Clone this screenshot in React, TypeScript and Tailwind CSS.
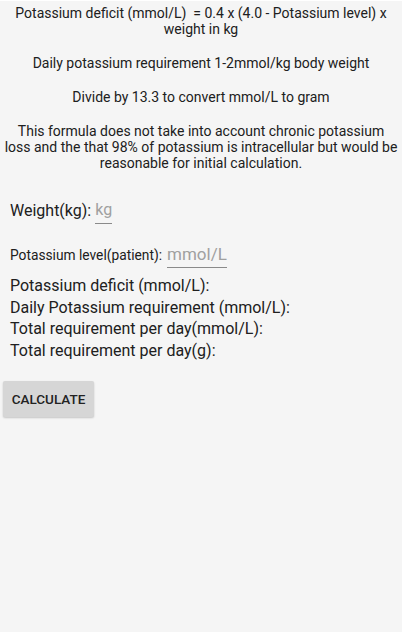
import React from "react";

export default function App() {
  return (
    <div
      className="w-[402px] h-[632px] bg-[#f5f5f5] text-[#202020] overflow-hidden"
      style={{ fontFamily: "Roboto, 'Noto Sans', sans-serif" }}
    >
      <div className="h-px bg-white" />
      <div className="flex flex-col px-[2px] pt-[4px] text-[14px] leading-[16px] text-center">
        <p>Potassium deficit (mmol/L)&nbsp; = 0.4 x (4.0 - Potassium level) x<br />weight in kg</p>
        <p className="mt-[18px]">Daily potassium requirement 1-2mmol/kg body weight</p>
        <p className="mt-[18px]">Divide by 13.3 to convert mmol/L to gram</p>
        <p className="mt-[18px]">
          This formula does not take into account chronic potassium
          <br />
          loss and the that 98% of potassium is intracellular but would be
          <br />
          reasonable for initial calculation.
        </p>
      </div>
      <div className="flex flex-col px-[10px]">
        <div className="mt-[27px] flex items-center text-[16px] leading-[24px]">
          <span>Weight(kg):</span>
          <span className="ml-[4px] text-[#a0a0a0] border-b border-[#8a8a8a] pb-[1px]">kg</span>
        </div>
        <div className="mt-[18px] flex items-center">
          <span className="text-[13.75px] leading-[20px]">Potassium level(patient):</span>
          <span className="ml-[5px] text-[17px] leading-[24px] text-[#a0a0a0] border-b border-[#8a8a8a] pb-[1px]">mmol/L</span>
        </div>
        <div className="mt-[7px] flex flex-col text-[16px] leading-[21.6px]">
          <span>Potassium deficit (mmol/L):</span>
          <span>Daily Potassium requirement (mmol/L):</span>
          <span>Total requirement per day(mmol/L):</span>
          <span>Total requirement per day(g):</span>
        </div>
      </div>
      <div className="px-[3px] mt-[20px]">
        <button className="w-[91px] h-[36px] bg-[#d6d6d6] rounded-[2px] shadow-[0_1px_2px_rgba(0,0,0,0.2)] text-[13.5px] font-medium text-[#222]">
          CALCULATE
        </button>
      </div>
    </div>
  );
}
